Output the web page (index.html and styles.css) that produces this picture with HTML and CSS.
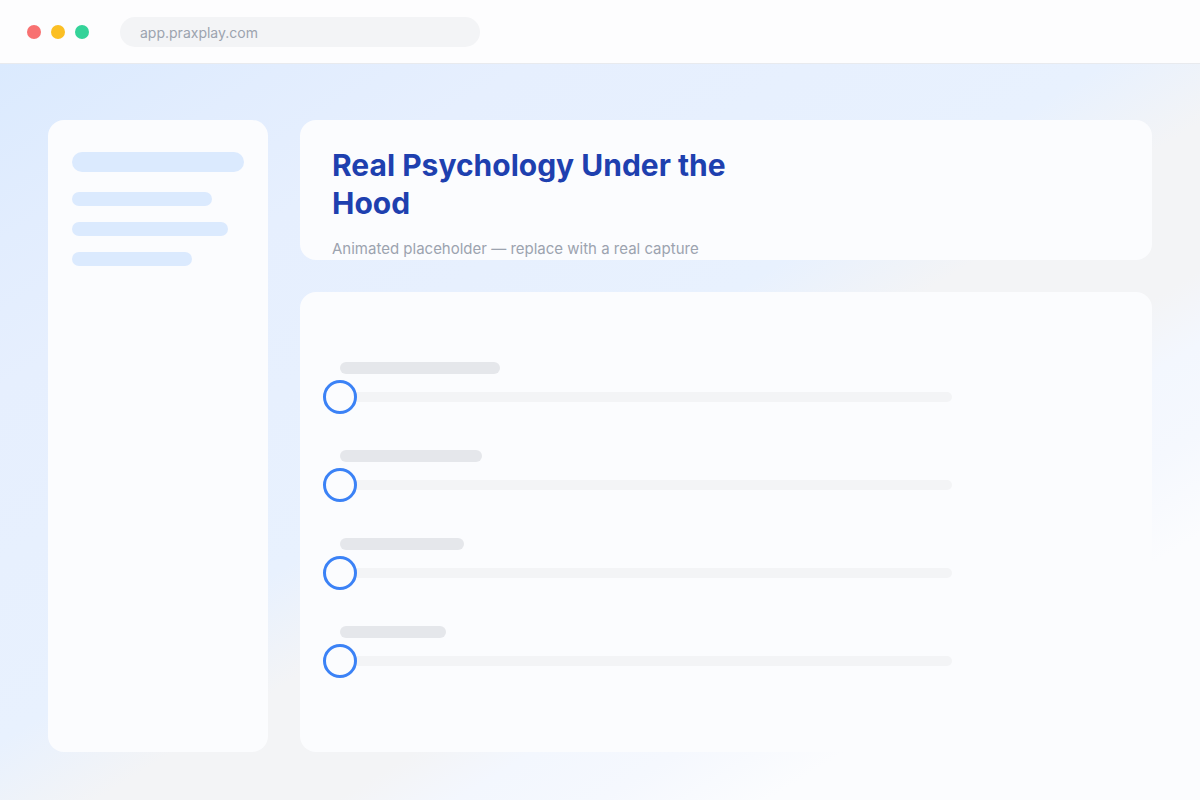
FILE: index.html
```html
<!DOCTYPE html>
<html lang="en">
<head>
  <meta charset="UTF-8">
  <meta name="viewport" content="width=device-width, initial-scale=1.0">
  <title>Praxplay - Preview</title>
  <link rel="stylesheet" href="styles.css">
</head>
<body>

<div class="window">
  <!-- browser chrome -->
  <div class="topbar">
    <div class="dots">
      <span class="dot red"></span>
      <span class="dot yellow"></span>
      <span class="dot green"></span>
    </div>
    <div class="url">app.praxplay.com</div>
  </div>

  <div class="stage">
    <aside class="sidebar">
      <div class="side-bar wide"></div>
      <div class="side-bar" style="width: 140px"></div>
      <div class="side-bar" style="width: 156px"></div>
      <div class="side-bar" style="width: 120px"></div>
    </aside>

    <div class="content">
      <div class="card header">
        <h1 class="title">Real Psychology Under the Hood</h1>
        <p class="subtitle">Animated placeholder — replace with a real capture</p>
      </div>

      <div class="card sliders">
        <div class="slider-row">
          <div class="label-bar" style="width: 160px"></div>
          <div class="track"><span class="thumb"></span></div>
        </div>
        <div class="slider-row">
          <div class="label-bar" style="width: 142px"></div>
          <div class="track"><span class="thumb"></span></div>
        </div>
        <div class="slider-row">
          <div class="label-bar" style="width: 124px"></div>
          <div class="track"><span class="thumb"></span></div>
        </div>
        <div class="slider-row">
          <div class="label-bar" style="width: 106px"></div>
          <div class="track"><span class="thumb"></span></div>
        </div>
      </div>
    </div>
  </div>
</div>

</body>
</html>
```

FILE: styles.css
```css
html, body {
  margin: 0;
  height: 100%;
}
body {
  font-family: 'Inter', 'Liberation Sans', sans-serif;
  color: #333;
}
.window {
  width: 1200px;
  height: 800px;
  display: flex;
  flex-direction: column;
  overflow: hidden;
}
/* Browser chrome */
.topbar {
  height: 63px;
  flex-shrink: 0;
  display: flex;
  align-items: center;
  padding-left: 27px;
  background-color: #fdfdfe;
  border-bottom: 1px solid #e8eaee;
}
.dots {
  display: flex;
  gap: 10px;
}
.dot {
  width: 14px;
  height: 14px;
  border-radius: 50%;
}
.red { background-color: #f87171; }
.yellow { background-color: #fbbf24; }
.green { background-color: #34d399; }
.url {
  margin-left: 31px;
  width: 340px;
  height: 30px;
  padding-left: 20px;
  border-radius: 15px;
  background-color: #f3f4f6;
  color: #9ca3af;
  font-size: 14px;
  line-height: 31px;
}
/* Page area */
.stage {
  flex: 1;
  display: grid;
  grid-template-columns: 220px 1fr;
  gap: 32px;
  padding: 56px 48px 48px;
  background: linear-gradient(to bottom right,
    #dbeafe 0%, #e2edfe 12%, #e6effe 22%, #e8f1fe 46%,
    #f3f4f6 54%, #f3f4f6 64%, #f3f7fe 69%, #f5f8fe 75%,
    #fbfcfe 82%, #fbfcfe 100%);
}
.card, .sidebar {
  background-color: #fbfcfe;
  border-radius: 16px;
}
.sidebar {
  padding: 32px 24px;
  display: flex;
  flex-direction: column;
  gap: 16px;
}
.side-bar {
  height: 14px;
  border-radius: 7px;
  background-color: #dbeafe;
}
.side-bar.wide {
  height: 20px;
  border-radius: 10px;
  margin-bottom: 4px;
}
.content {
  display: flex;
  flex-direction: column;
  gap: 32px;
  min-height: 0;
}
/* Header card */
.header {
  height: 140px;
  box-sizing: border-box;
  padding: 27px 32px 0;
  overflow: hidden;
}
.title {
  margin: 0;
  max-width: 460px;
  font-size: 30px;
  line-height: 1.25;
  font-weight: 700;
  color: #1e40af;
}
.subtitle {
  margin: 16px 0 0;
  font-size: 15px;
  line-height: 1.5;
  color: #9ca3af;
}
/* Slider card */
.sliders {
  flex: 1;
  padding: 70px 0 0 40px;
}
.slider-row {
  margin-bottom: 48px;
}
.label-bar {
  height: 12px;
  border-radius: 6px;
  background-color: #e5e7eb;
  margin-bottom: 18px;
}
.track {
  position: relative;
  width: 612px;
  height: 10px;
  border-radius: 5px;
  background-color: #f3f4f6;
}
.thumb {
  position: absolute;
  left: -17px;
  top: -12px;
  width: 34px;
  height: 34px;
  box-sizing: border-box;
  border: 3px solid #3b82f6;
  border-radius: 50%;
  background-color: #fbfcfe;
}
```
